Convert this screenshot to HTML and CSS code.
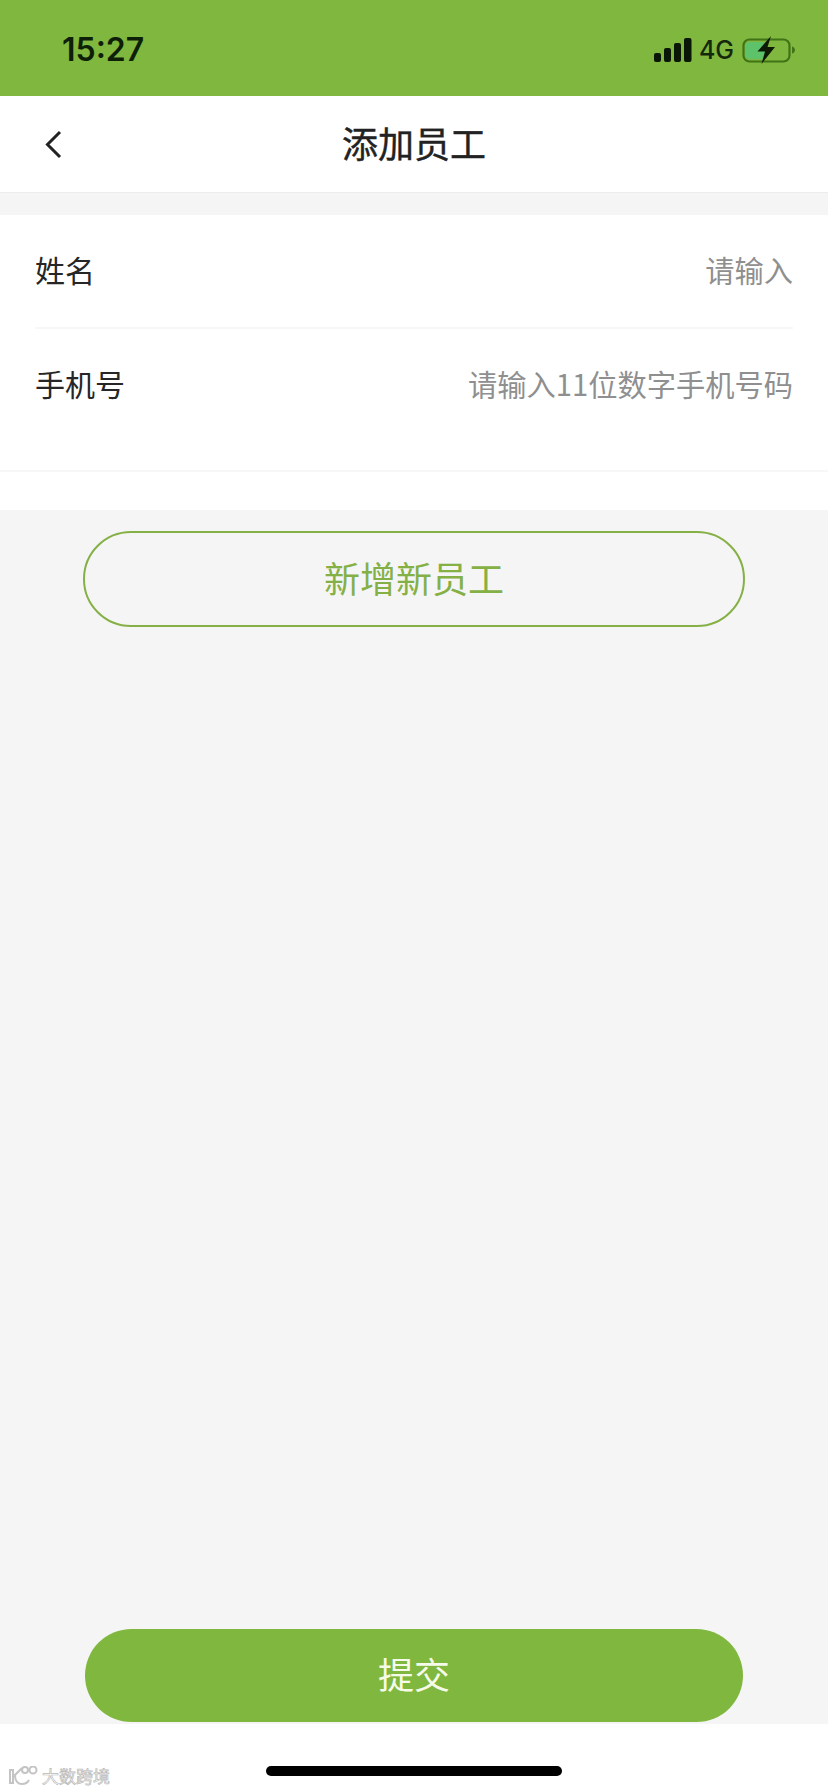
FILE: index.html
```html
<!DOCTYPE html>
<html lang="zh-CN">
<head>
  <meta charset="UTF-8">
  <meta name="viewport" content="width=device-width, initial-scale=1.0">
  <title>添加员工</title>
  <link rel="stylesheet" href="styles.css">
</head>
<body>

  <div class="phone">
    <div class="status-bar">
      <span class="time">15:27</span>
      <div class="status-icons">
        <svg class="signal" width="38" height="24" viewBox="0 0 38 24">
          <rect x="0" y="15" width="7" height="9" rx="2"/>
          <rect x="10" y="10" width="7" height="14" rx="2"/>
          <rect x="20" y="5" width="7" height="19" rx="2"/>
          <rect x="30" y="0" width="7.5" height="24" rx="2"/>
        </svg>
        <span class="network">4G</span>
        <svg class="battery" width="53" height="28" viewBox="0 0 53 28">
          <rect x="1.5" y="3.5" width="46" height="22" rx="6" fill="none" stroke="#3f7316" stroke-width="2.2"/>
          <rect x="4" y="6" width="19" height="17" rx="3" fill="#5dc26a"/>
          <path d="M50 10.5c2 .5 3 2 3 3.500s-1 3-3 3.500z" fill="#3f7316"/>
          <path d="M29 0 L15.500 15.500 H23 L19.500 28 L33 11 H25.500 Z" fill="#0c1a06"/>
        </svg>
      </div>
    </div>

    <div class="nav-bar">
      <svg class="back" width="17" height="29" viewBox="0 0 17 29">
        <path d="M15 2 L2.500 14.500 L15 27" fill="none" stroke="#222" stroke-width="3"/>
      </svg>
      <h1 class="title">添加员工</h1>
    </div>

    <form class="form-card">
      <label class="form-row">
        <span class="form-label">姓名</span>
        <input class="form-input" type="text" placeholder="请输入">
      </label>
      <label class="form-row form-row-last">
        <span class="form-label">手机号</span>
        <input class="form-input" type="tel" placeholder="请输入11位数字手机号码">
      </label>
    </form>

    <div class="content">
      <button class="add-btn" type="button">新增新员工</button>
      <button class="submit-btn" type="button">提交</button>
    </div>

    <div class="footer">
      <div class="home-bar"></div>
    </div>

    <div class="watermark">
      <svg width="32" height="20" viewBox="0 0 32 20">
        <path d="M2 4v13h3V4zM14 2 L7 9c0 6 3 9 7 9s6-2 7-4" fill="#fff" stroke="#c4c4c4" stroke-width="2"/>
        <circle cx="17" cy="4" r="3" fill="#fff" stroke="#c4c4c4" stroke-width="2"/>
        <circle cx="25" cy="4" r="3.500" fill="#fff" stroke="#c4c4c4" stroke-width="2"/>
      </svg>
      <span>大数跨境</span>
    </div>
  </div>

</body>
</html>
```

FILE: styles.css
```css
* {
  box-sizing: border-box;
}

body {
  margin: 0;
  padding: 0;
  background: #ffffff;
  font-family: "Noto Sans CJK SC", "Noto Sans", sans-serif;
}

.phone {
  position: relative;
  width: 828px;
  height: 1792px;
  display: flex;
  flex-direction: column;
  overflow: hidden;
  background: #f5f5f6;
}

.status-bar {
  height: 96px;
  flex-shrink: 0;
  display: flex;
  justify-content: space-between;
  align-items: center;
  padding: 3px 33px 0 62px;
  background: #80b73e;
  color: #0e1f08;
}

.time {
  font-family: Inter, Roboto, sans-serif;
  font-size: 32px;
  font-weight: 600;
}

.status-icons {
  display: flex;
  align-items: center;
}

.signal {
  fill: #0a1606;
  margin-right: 7px;
}

.network {
  font-family: Inter, Roboto, sans-serif;
  font-size: 25px;
  font-weight: 500;
  line-height: 28px;
  color: #14280c;
  margin-right: 8px;
}

.nav-bar {
  height: 97px;
  flex-shrink: 0;
  display: flex;
  justify-content: center;
  align-items: center;
  position: relative;
  padding-bottom: 4px;
  background: #ffffff;
  border-bottom: 1px solid #ececec;
}

.back {
  position: absolute;
  left: 45px;
  top: 34px;
}

.title {
  margin: 0;
  font-size: 36px;
  font-weight: 400;
  line-height: 50px;
  color: #222222;
  -webkit-text-stroke: 0.4px #222222;
}

.form-card {
  flex-shrink: 0;
  margin-top: 22px;
  height: 295px;
  background: #ffffff;
  padding-left: 35px;
}

.form-row {
  display: flex;
  justify-content: space-between;
  align-items: center;
  height: 114px;
  padding-right: 35px;
  padding-bottom: 4px;
  border-bottom: 2px solid #f7f7f7;
}

.form-row:first-child {
  margin-right: 35px;
  padding-right: 0;
}

.form-row-last {
  height: 143px;
  margin-left: -35px;
  padding-left: 35px;
  padding-bottom: 33px;
}

.form-label {
  font-size: 30px;
  color: #262626;
  white-space: nowrap;
}

.form-input {
  flex: 1;
  min-width: 0;
  padding: 0;
  border: none;
  outline: none;
  background: transparent;
  text-align: right;
  font-family: inherit;
  font-size: 29.250px;
}

.form-input::placeholder {
  color: #8f8f8f;
  opacity: 1;
}

.content {
  flex: 1;
  display: flex;
  flex-direction: column;
  align-items: center;
  justify-content: space-between;
  padding: 21px 0 2px;
}

.add-btn {
  width: 662px;
  height: 96px;
  padding-bottom: 6px;
  border: 2px solid #85b045;
  border-radius: 48px;
  background: transparent;
  font-family: inherit;
  font-size: 36px;
  color: #85b045;
}

.submit-btn {
  width: 658px;
  height: 93px;
  padding-bottom: 6px;
  border: none;
  border-radius: 47px;
  background: #80b73e;
  font-family: inherit;
  font-size: 36px;
  color: #f6fbe9;
}

.footer {
  height: 68px;
  flex-shrink: 0;
  display: flex;
  justify-content: center;
  padding-top: 42px;
  background: #ffffff;
}

.home-bar {
  width: 296px;
  height: 10px;
  border-radius: 5px;
  background: #000000;
}

.watermark {
  position: absolute;
  left: 8px;
  top: 1765px;
  display: flex;
  align-items: center;
  gap: 2px;
  font-size: 17px;
  line-height: 22px;
  color: #ffffff;
  -webkit-text-stroke: 0.7px #b8b8b8;
}
```
